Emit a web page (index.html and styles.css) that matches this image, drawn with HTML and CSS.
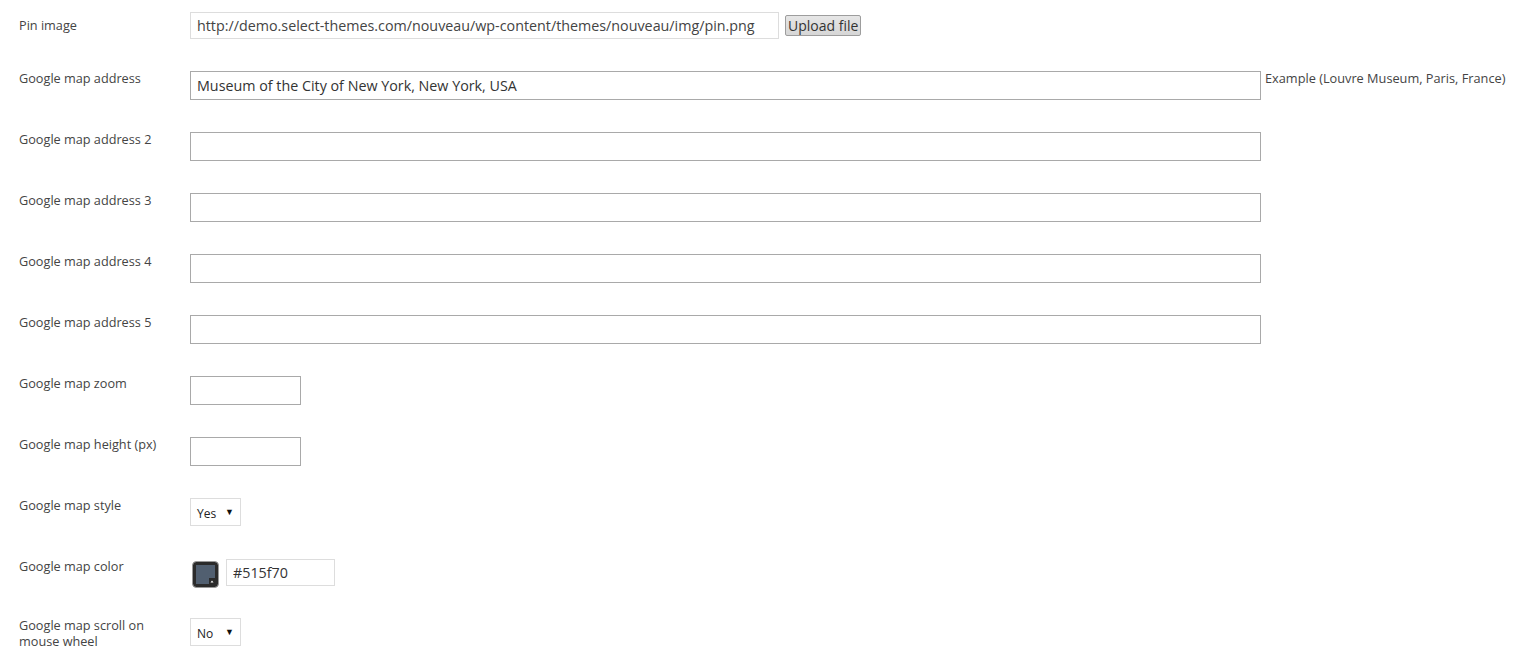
FILE: index.html
```html
<!DOCTYPE html>
<html lang="en">
<head>
  <meta charset="UTF-8">
  <title>Map settings</title>
  <link rel="stylesheet" href="styles.css">
</head>
<body>
  <div class="options">
    <div class="row row-pin">
      <label class="label">Pin image</label>
      <div class="field">
        <input class="text pin" type="text" value="http://demo.select-themes.com/nouveau/wp-content/themes/nouveau/img/pin.png">
        <button class="upload">Upload file</button>
      </div>
    </div>
    <div class="row">
      <label class="label">Google map address</label>
      <div class="field">
        <input class="text wide" type="text" value="Museum of the City of New York, New York, USA">
        <span class="hint">Example (Louvre Museum, Paris, France)</span>
      </div>
    </div>
    <div class="row">
      <label class="label">Google map address 2</label>
      <div class="field"><input class="text wide" type="text"></div>
    </div>
    <div class="row">
      <label class="label">Google map address 3</label>
      <div class="field"><input class="text wide" type="text"></div>
    </div>
    <div class="row">
      <label class="label">Google map address 4</label>
      <div class="field"><input class="text wide" type="text"></div>
    </div>
    <div class="row">
      <label class="label">Google map address 5</label>
      <div class="field"><input class="text wide" type="text"></div>
    </div>
    <div class="row">
      <label class="label">Google map zoom</label>
      <div class="field"><input class="text small" type="text"></div>
    </div>
    <div class="row">
      <label class="label">Google map height (px)</label>
      <div class="field"><input class="text small" type="text"></div>
    </div>
    <div class="row">
      <label class="label">Google map style</label>
      <div class="field">
        <div class="select"><span>Yes</span><span class="arrow">&#9660;</span></div>
      </div>
    </div>
    <div class="row row-color">
      <label class="label">Google map color</label>
      <div class="field">
        <span class="swatch">
          <svg width="27" height="27" viewBox="0 0 27 27">
            <rect x="0.5" y="0.5" width="26" height="26" rx="4" fill="#2b2b2b" stroke="#9a9a9a"/>
            <rect x="4" y="4" width="19" height="19" fill="#515f70"/>
            <rect x="17" y="17" width="6" height="6" fill="#2b2b2b"/>
            <path d="M18.5 21.5 L20 19.5 L21.5 21.5 Z" fill="#fff"/>
          </svg>
        </span>
        <input class="text color" type="text" value="#515f70">
      </div>
    </div>
    <div class="row">
      <label class="label">Google map scroll on mouse wheel</label>
      <div class="field">
        <div class="select"><span>No</span><span class="arrow">&#9660;</span></div>
      </div>
    </div>
  </div>
</body>
</html>
```

FILE: styles.css
```css
body {
  margin: 0;
  background: #fff;
  font-family: "Open Sans", sans-serif;
  color: #444;
}
.options {
  padding: 12px 0 0 19px;
}
.row {
  display: flex;
  align-items: flex-start;
  height: 61px;
}
.row-pin {
  height: 59px;
}
.row-color {
  height: 59px;
}
.label {
  flex: none;
  width: 160px;
  margin-right: 11px;
  margin-top: -1px;
  font-size: 12.7px;
  line-height: 16px;
}
.row-pin .label {
  margin-top: 5px;
}
.field {
  display: flex;
  align-items: flex-start;
}
.text {
  box-sizing: border-box;
  margin: 0;
  height: 29px;
  padding: 0 6px;
  border: 1px solid #a9a9a9;
  font-family: "Open Sans", sans-serif;
  font-size: 14.3px;
  color: #333;
  background: #fff;
  outline: none;
}
.pin {
  width: 589px;
  height: 27px;
  border-color: #ddd;
  color: #444;
}
.upload {
  margin: 3px 0 0 6px;
  height: 21px;
  padding: 0 2px;
  border: 1px solid #9d9d9d;
  border-radius: 2px;
  background: linear-gradient(#e6e6e6, #d6d6d6);
  font-family: "Open Sans", sans-serif;
  font-size: 14px;
  line-height: 18px;
  color: #333;
}
.wide {
  width: 1071px;
}
.hint {
  margin: -1px 0 0 4px;
  font-size: 12.75px;
  line-height: 16px;
  color: #444;
}
.small {
  width: 111px;
}
.select {
  box-sizing: border-box;
  display: flex;
  justify-content: space-between;
  align-items: center;
  width: 51px;
  height: 28px;
  padding: 2px 6px 0 6px;
  border: 1px solid #ddd;
  font-size: 12px;
  color: #222;
}
.arrow {
  font-size: 9px;
  color: #111;
  margin-top: -3px;
}
.swatch {
  display: block;
  width: 27px;
  height: 27px;
  margin: 2px 7px 0 2px;
}
.swatch svg {
  display: block;
}
.color {
  width: 109px;
  height: 27px;
  border-color: #ddd;
  color: #333;
}
```
